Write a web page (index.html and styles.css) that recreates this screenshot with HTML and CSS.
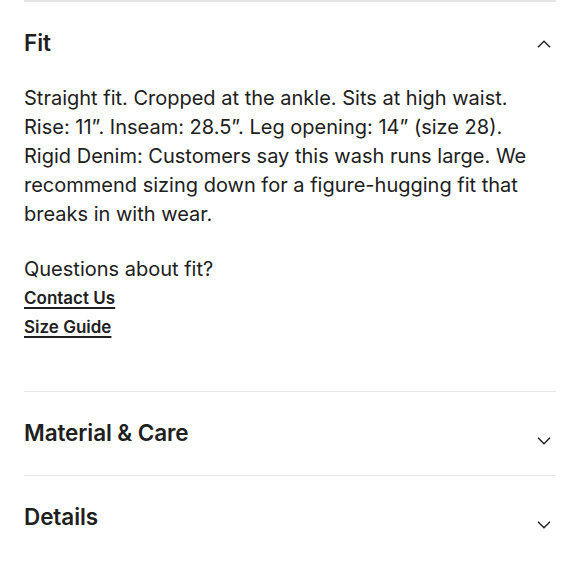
FILE: index.html
```html
<!DOCTYPE html>
<html lang="en">
<head>
<meta charset="utf-8">
<link rel="stylesheet" href="styles.css">
</head>
<body>
<div class="accordion">
  <section class="item item-open">
    <div class="item-head">
      <h2 class="item-title">Fit</h2>
      <svg class="chev chev-up" width="14" height="8" viewBox="0 0 14 8"><path d="M1 7.2 L7 1.2 L13 7.2" fill="none" stroke="#1f1f1f" stroke-width="1.4"/></svg>
    </div>
    <div class="item-body">
      <p class="desc">Straight fit. Cropped at the ankle. Sits at high waist.<br>Rise: 11”. Inseam: 28.5”. Leg opening: 14” (size 28).<br>Rigid Denim: Customers say this wash runs large. We recommend sizing down for a figure-hugging fit that breaks in with wear.</p>
      <p class="question">Questions about fit?</p>
      <a class="link" href="#">Contact Us</a>
      <a class="link" href="#">Size Guide</a>
    </div>
  </section>
  <section class="item">
    <div class="item-head">
      <h2 class="item-title">Material &amp; Care</h2>
      <svg class="chev chev-down" width="14" height="8" viewBox="0 0 14 8"><path d="M1 0.8 L7 6.8 L13 0.8" fill="none" stroke="#1f1f1f" stroke-width="1.4"/></svg>
    </div>
  </section>
  <section class="item">
    <div class="item-head">
      <h2 class="item-title">Details</h2>
      <svg class="chev chev-down" width="14" height="8" viewBox="0 0 14 8"><path d="M1 0.8 L7 6.8 L13 0.8" fill="none" stroke="#1f1f1f" stroke-width="1.4"/></svg>
    </div>
  </section>
</div>
</body>
</html>
```
FILE: styles.css
```css
html, body {
  margin: 0;
  padding: 0;
  background: #ffffff;
}
body {
  font-family: Inter, "Noto Sans", "Liberation Sans", sans-serif;
  color: #202020;
}
.accordion {
  padding: 0 24px;
}
.item {
  border-top: 2px solid #e6e6e6;
}
.item + .item {
  border-top-width: 1px;
}
.item-head {
  box-sizing: border-box;
  height: 82px;
  padding: 0 5px 2px 0;
  display: flex;
  align-items: center;
  justify-content: space-between;
}
.item + .item .item-head {
  height: 83px;
}
.item-title {
  margin: 0;
  font-size: 22.5px;
  font-weight: 600;
  letter-spacing: -0.1px;
}
.chev-up {
  margin-top: 3px;
}
.chev-down {
  margin-top: 17px;
}
.item-body {
  padding-bottom: 49px;
}
.desc {
  margin: 0;
  font-size: 20px;
  line-height: 29px;
}
.question {
  margin: 26px 0 0;
  font-size: 20px;
  line-height: 29px;
}
.link {
  display: block;
  width: max-content;
  font-size: 17px;
  font-weight: 600;
  line-height: 29px;
  color: #202020;
  text-decoration: underline;
  text-decoration-thickness: 1.5px;
  text-underline-offset: 3px;
}
```
